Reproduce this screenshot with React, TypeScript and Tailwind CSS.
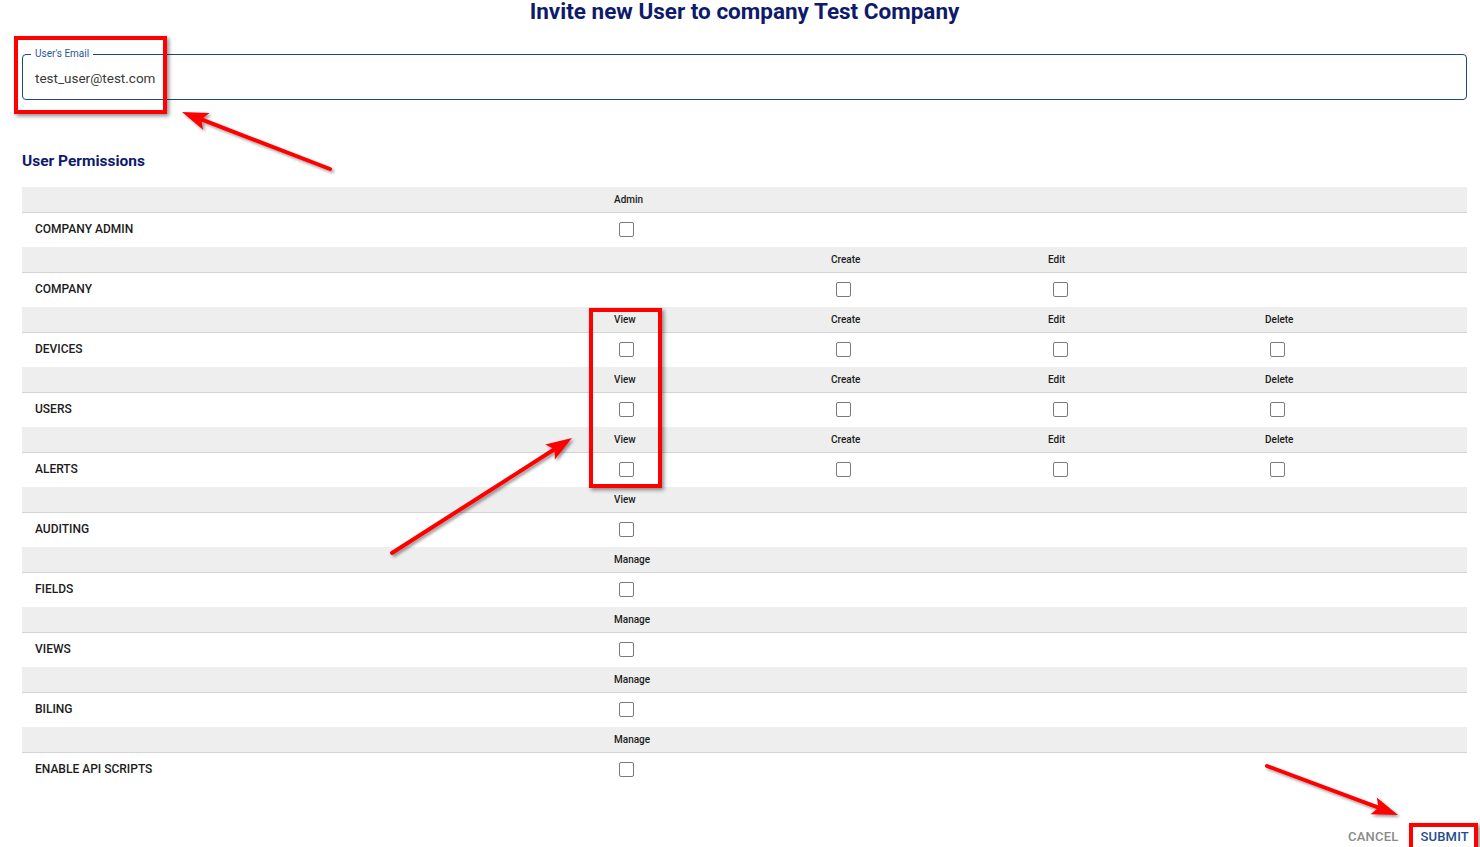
import React from "react";

type Cell = { col: number; label: string };
type Row = { name: string; cells: Cell[] };

const rows: Row[] = [
  { name: "COMPANY ADMIN", cells: [{ col: 0, label: "Admin" }] },
  { name: "COMPANY", cells: [{ col: 1, label: "Create" }, { col: 2, label: "Edit" }] },
  { name: "DEVICES", cells: [{ col: 0, label: "View" }, { col: 1, label: "Create" }, { col: 2, label: "Edit" }, { col: 3, label: "Delete" }] },
  { name: "USERS", cells: [{ col: 0, label: "View" }, { col: 1, label: "Create" }, { col: 2, label: "Edit" }, { col: 3, label: "Delete" }] },
  { name: "ALERTS", cells: [{ col: 0, label: "View" }, { col: 1, label: "Create" }, { col: 2, label: "Edit" }, { col: 3, label: "Delete" }] },
  { name: "AUDITING", cells: [{ col: 0, label: "View" }] },
  { name: "FIELDS", cells: [{ col: 0, label: "Manage" }] },
  { name: "VIEWS", cells: [{ col: 0, label: "Manage" }] },
  { name: "BILING", cells: [{ col: 0, label: "Manage" }] },
  { name: "ENABLE API SCRIPTS", cells: [{ col: 0, label: "Manage" }] },
];

function Checkbox() {
  return <div className="ml-[5px] w-[15px] h-[15px] rounded-[2px] border-[1.5px] border-[#7b7b7b] bg-white" />;
}

function PermRow({ row }: { row: Row }) {
  const byCol = (c: number) => row.cells.find((x) => x.col === c);
  return (
    <div>
      <div className="grid grid-cols-[592px_217px_217px_217px_1fr] h-[26px] pt-[3px] bg-[#eeeeee] border-b border-[#d4d4d4] items-center text-[10px] font-medium text-[#1c1c1c]">
        <div />
        {[0, 1, 2, 3].map((c) => (
          <div key={c}>{byCol(c)?.label ?? ""}</div>
        ))}
        <div />
      </div>
      <div className="grid grid-cols-[592px_217px_217px_217px_1fr] h-[34px] pt-[4px] items-center">
        <div className="pl-[13px] text-[12px] font-medium text-[#1c1c1c]">{row.name}</div>
        {[0, 1, 2, 3].map((c) => (
          <div key={c}>{byCol(c) ? <Checkbox /> : null}</div>
        ))}
        <div />
      </div>
    </div>
  );
}

function Arrow({ x1, y1, x2, y2 }: { x1: number; y1: number; x2: number; y2: number }) {
  const dx = x2 - x1;
  const dy = y2 - y1;
  const len = Math.hypot(dx, dy);
  const ux = dx / len;
  const uy = dy / len;
  const nx = -uy;
  const ny = ux;
  const L = 26;
  const W = 18;
  const bx = x2 - ux * L;
  const by = y2 - uy * L;
  const mx = x2 - ux * L * 0.8;
  const my = y2 - uy * L * 0.8;
  const pts = [
    [x2, y2],
    [bx + (nx * W) / 2, by + (ny * W) / 2],
    [mx, my],
    [bx - (nx * W) / 2, by - (ny * W) / 2],
  ]
    .map((p) => p.join(","))
    .join(" ");
  return (
    <g>
      <line x1={x1} y1={y1} x2={mx} y2={my} stroke="#ff0000" strokeWidth={4} strokeLinecap="round" />
      <polygon points={pts} fill="#ff0000" />
    </g>
  );
}

export default function App() {
  return (
    <div className="relative w-[1480px] h-[847px] overflow-hidden bg-white font-['Roboto',sans-serif]">
      <div className="pl-[22px] pr-[13px]">
        <h1 className="-mt-[1px] text-center text-[22.5px] leading-[24px] font-bold text-[#0e1a6a]">
          Invite new User to company Test Company
        </h1>

        <fieldset className="mt-[25px] h-[52px] border border-[#1d4a78] rounded-[4px] px-[8px]">
          <legend className="px-[4px] text-[10px] leading-[12px] text-[#1f5a92]">User's Email</legend>
          <div className="pl-[4px] pt-[10px] text-[13.5px] text-[#3a3a3a] leading-[16px]">test_user@test.com</div>
        </fieldset>

        <h2 className="mt-[51px] text-[15.5px] leading-[20px] font-bold text-[#0e1a6a]">User Permissions</h2>

        <div className="mt-[16px]">
          {rows.map((r) => (
            <PermRow key={r.name} row={r} />
          ))}
        </div>

        <div className="mt-[38px] -mr-[2px] flex justify-end items-center gap-[22px] text-[13px] font-medium tracking-[0.2px] leading-[24px]">
          <span className="text-[#8a8a8a]">CANCEL</span>
          <span className="text-[#1f4d8a]">SUBMIT</span>
        </div>
      </div>

      {/* annotations */}
      <div className="absolute left-[14px] top-[36px] w-[153px] h-[78px] border-[4px] border-[#ff0000] shadow-[2px_2px_4px_rgba(0,0,0,0.45)]" />
      <div className="absolute left-[589px] top-[308px] w-[73px] h-[180px] border-[4px] border-[#ff0000] shadow-[2px_2px_4px_rgba(0,0,0,0.45)]" />
      <div className="absolute left-[1409px] top-[823px] w-[69px] h-[30px] border-[4px] border-[#ff0000] shadow-[2px_2px_4px_rgba(0,0,0,0.45)]" />
      <svg className="absolute left-0 top-0 pointer-events-none" width={1480} height={847}>
        <defs>
          <filter id="sh" x="-20%" y="-20%" width="140%" height="140%">
            <feDropShadow dx="2" dy="2" stdDeviation="1.5" floodColor="#000" floodOpacity="0.4" />
          </filter>
        </defs>
        <g filter="url(#sh)">
          <Arrow x1={330} y1={169} x2={182} y2={112} />
          <Arrow x1={392} y1={553} x2={572} y2={438} />
          <Arrow x1={1267} y1={766} x2={1398} y2={815} />
        </g>
      </svg>
    </div>
  );
}
